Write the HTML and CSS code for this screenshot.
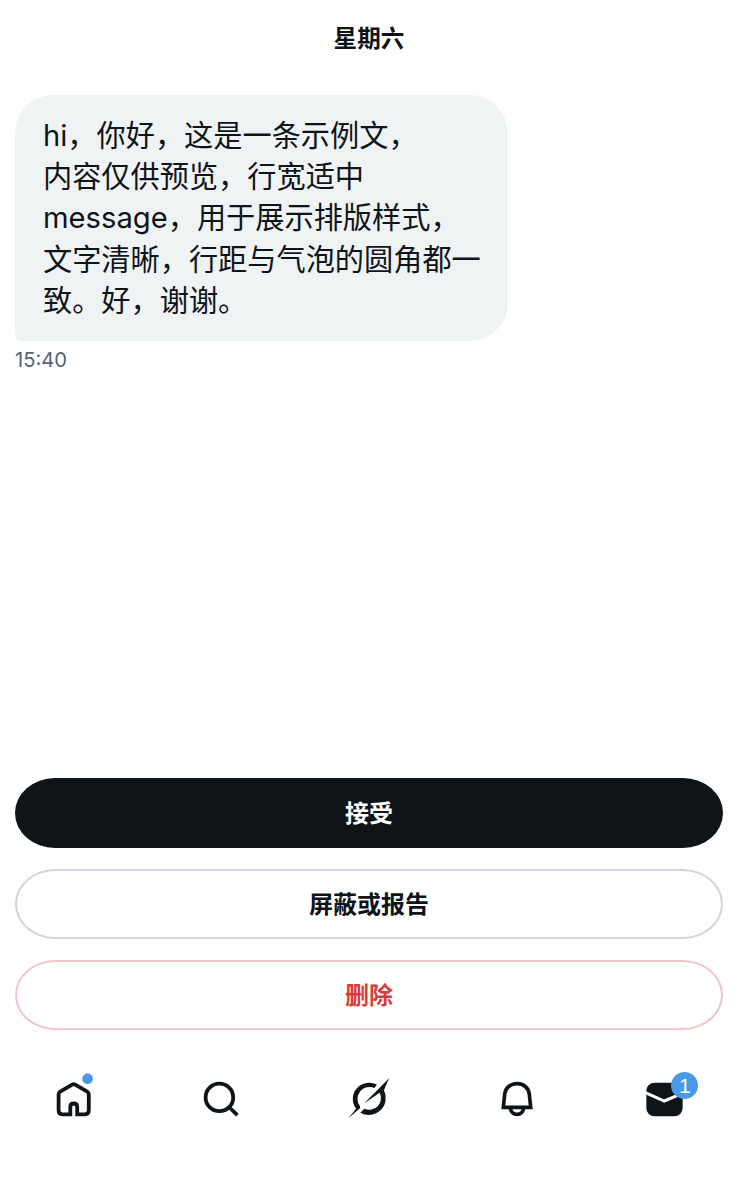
FILE: index.html
```html
<!DOCTYPE html>
<html lang="zh-CN">
<head>
  <meta charset="UTF-8">
  <meta name="viewport" content="width=device-width, initial-scale=1">
  <title>私信请求</title>
  <link rel="stylesheet" href="styles.css">
</head>
<body>
  <!-- 对话 -->
  <main class="chat">
    <h1 class="day">星期六</h1>
    <div class="bubble">hi，你好，这是一条示例文，<br>内容仅供预览，行宽适中<br>message，用于展示排版样式，<br>文字清晰，行距与气泡的圆角都一<br>致。好，谢谢。</div>
    <time class="time">15:40</time>
  </main>

  <!-- 请求操作 -->
  <section class="actions">
    <button class="btn accept">接受</button>
    <button class="btn report">屏蔽或报告</button>
    <button class="btn delete">删除</button>
  </section>

  <!-- 底部导航 -->
  <nav class="tabs">
    <a class="tab">
      <svg viewBox="0 0 60 60">
        <path class="line" d="M26.3 44.3H18.5Q14.6 44.3 14.6 40.3V24.5Q14.6 22.6 16.2 21.6L28.2 14.7Q29.7 13.8 31.2 14.7L43.2 21.6Q44.8 22.6 44.8 24.5V40.3Q44.8 44.3 40.8 44.3H33.2V37Q33.2 33.5 29.75 33.5Q26.3 33.5 26.3 37Z"/>
        <circle class="dot" cx="43.6" cy="8.7" r="5.4"/>
      </svg>
    </a>
    <a class="tab">
      <svg viewBox="0 0 60 60">
        <circle class="line" cx="28.4" cy="27.4" r="13.8"/>
        <path class="line" d="M38 37L46.4 45.2"/>
      </svg>
    </a>
    <a class="tab">
      <svg viewBox="12 15 180 180">
        <path d="M126 59A49 49 0 0 0 63 131Q57 140 38 161L75 130V124A36 36 0 0 1 118 69Z"/>
        <path d="M76 143A51 51 0 0 0 147 76Q151 64 163 39L88 115L134 83A35 35 0 0 1 88 131Z"/>
      </svg>
    </a>
    <a class="tab">
      <svg viewBox="5 15 180 180">
        <path class="line wide" d="M54 127L58 88C60 68 76 56 95 56S130 68 132 88L136 127Z"/>
        <path class="line wide" d="M75 130C80 154 110 154 115 130"/>
      </svg>
    </a>
    <a class="tab">
      <svg viewBox="12 30 180 180">
        <rect x="49" y="68" width="109" height="101" rx="25"/>
        <path class="flap" d="M46 98L103 123L162 98"/>
      </svg>
      <span class="badge">1</span>
    </a>
  </nav>
</body>
</html>
```
FILE: styles.css
```css
* {
  box-sizing: border-box;
  margin: 0;
  padding: 0;
}
body {
  display: flex;
  flex-direction: column;
  height: 1200px;
  background: #fff;
  color: #0f1419;
  font-family: Inter, "Noto Sans CJK SC", sans-serif;
}
/* 对话 */
.chat {
  display: flex;
  flex-direction: column;
  align-items: flex-start;
  height: 778px;
  padding: 21px 15px 0;
}
.day {
  align-self: center;
  margin-bottom: 38px;
  font-size: 23.6px;
  line-height: 36px;
  font-weight: 700;
}
.bubble {
  width: 493px;
  height: 246px;
  padding: 20px 28px;
  border-radius: 38px 38px 38px 6px;
  background: #eff3f4;
  font-size: 29.2px;
  line-height: 41.2px;
  white-space: nowrap;
}
.time {
  margin-top: 6px;
  color: #536471;
  font-size: 20.2px;
  line-height: 26px;
}
/* 请求操作 */
.actions {
  display: flex;
  flex-direction: column;
  gap: 21px;
  padding: 0 15px;
}
.btn {
  height: 70px;
  padding-bottom: 4px;
  border: 2px solid #cfd9de;
  border-radius: 40px / 35px;
  background: #fff;
  color: #0f1419;
  font: inherit;
  font-size: 24px;
  font-weight: 700;
}
.accept {
  border-color: #0f1419;
  background: #0f1419;
  color: #fff;
}
.report {
  border-color: #cfd6dd;
}
.delete {
  border-color: #f0c6cb;
  color: #d93b3b;
}
/* 底部导航 */
.tabs {
  display: grid;
  grid-template-columns: repeat(5, 1fr);
  margin-top: 40px;
}
.tab {
  position: relative;
  display: flex;
  justify-content: center;
}
.tab svg {
  width: 60px;
  height: 60px;
  fill: #0f1419;
}
.tab .line {
  fill: none;
  stroke: #0f1419;
  stroke-width: 3.8;
}
.tab .wide {
  stroke-width: 11;
}
.tab .dot {
  fill: #4a99e9;
}
.tab .flap {
  fill: none;
  stroke: #fff;
  stroke-width: 9;
}
.badge {
  position: absolute;
  top: 2px;
  left: 81px;
  width: 27px;
  height: 27px;
  border-radius: 50%;
  background: #4a99e9;
  color: #fff;
  font-family: "Liberation Sans", sans-serif;
  font-size: 21px;
  line-height: 27px;
  text-align: center;
}
```
